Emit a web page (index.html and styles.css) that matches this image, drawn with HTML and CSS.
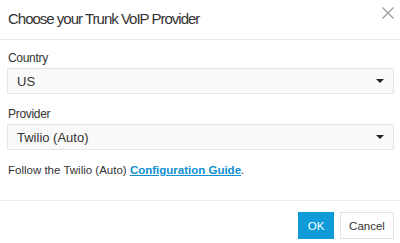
FILE: index.html
```html
<!DOCTYPE html>
<html>
<head>
<meta charset="utf-8">
<link rel="stylesheet" href="styles.css">
</head>
<body>
<div class="dialog">
  <div class="header">
    <div class="title">Choose your Trunk VoIP Provider</div>
    <svg class="close" width="12" height="12" viewBox="0 0 12 12"><path d="M0.5 0.5 L11.5 11.5 M11.5 0.5 L0.5 11.5" stroke="#9a9a9a" stroke-width="1.2" fill="none"/></svg>
  </div>
  <div class="body">
    <div class="field">
      <div class="label">Country</div>
      <div class="select"><span>US</span><span class="caret"></span></div>
    </div>
    <div class="field">
      <div class="label">Provider</div>
      <div class="select"><span>Twilio (Auto)</span><span class="caret"></span></div>
    </div>
    <div class="note">Follow the Twilio (Auto) <a href="#">Configuration Guide</a>.</div>
  </div>
  <div class="footer">
    <button class="btn primary">OK</button>
    <button class="btn">Cancel</button>
  </div>
</div>
</body>
</html>
```
FILE: styles.css
```css
html, body { margin: 0; padding: 0; background: #fff; }
body { font-family: "Liberation Sans", Arial, sans-serif; color: #333; font-size: 11.5px; }
.dialog { width: 400px; height: 243px; display: flex; flex-direction: column; }
.header { height: 40px; box-sizing: border-box; border-bottom: 1px solid #e8e8e8; display: flex; align-items: center; justify-content: space-between; padding: 0 6px 0 8px; }
.title { font-size: 15px; letter-spacing: -1px; color: #333; margin-top: -3px; }
.close { margin-top: -14px; }
.body { padding: 10px 6px 0 7px; flex: 1; }
.field { margin-bottom: 12px; }
.label { line-height: 16px; margin-bottom: 2px; padding-left: 1px; font-size: 12px; letter-spacing: -0.3px; }
.select { height: 26px; box-sizing: border-box; border: 1px solid #e6e6e6; background: #f9f9f9; display: flex; align-items: center; justify-content: space-between; padding: 0 9px 0 9px; font-size: 13px; }
.caret { width: 0; height: 0; border-left: 4px solid transparent; border-right: 4px solid transparent; border-top: 4px solid #222; }
.note { padding-left: 1px; margin-top: 2px; line-height: 16px; }
.note a { color: #0e8fd0; font-weight: bold; text-decoration: underline; }
.footer { height: 43px; box-sizing: border-box; border-top: 1px solid #ececec; display: flex; justify-content: flex-end; align-items: flex-start; padding: 11px 6px 0 0; gap: 6px; }
.btn { font-family: "Liberation Sans", Arial, sans-serif; font-size: 11.5px; height: 27px; width: 54px; padding: 0; border: 1px solid #e3e3e3; background: #fff; color: #333; }
.btn.primary { background: #0f9bd7; border-color: #0f9bd7; color: #fff; width: 36px; }
```
